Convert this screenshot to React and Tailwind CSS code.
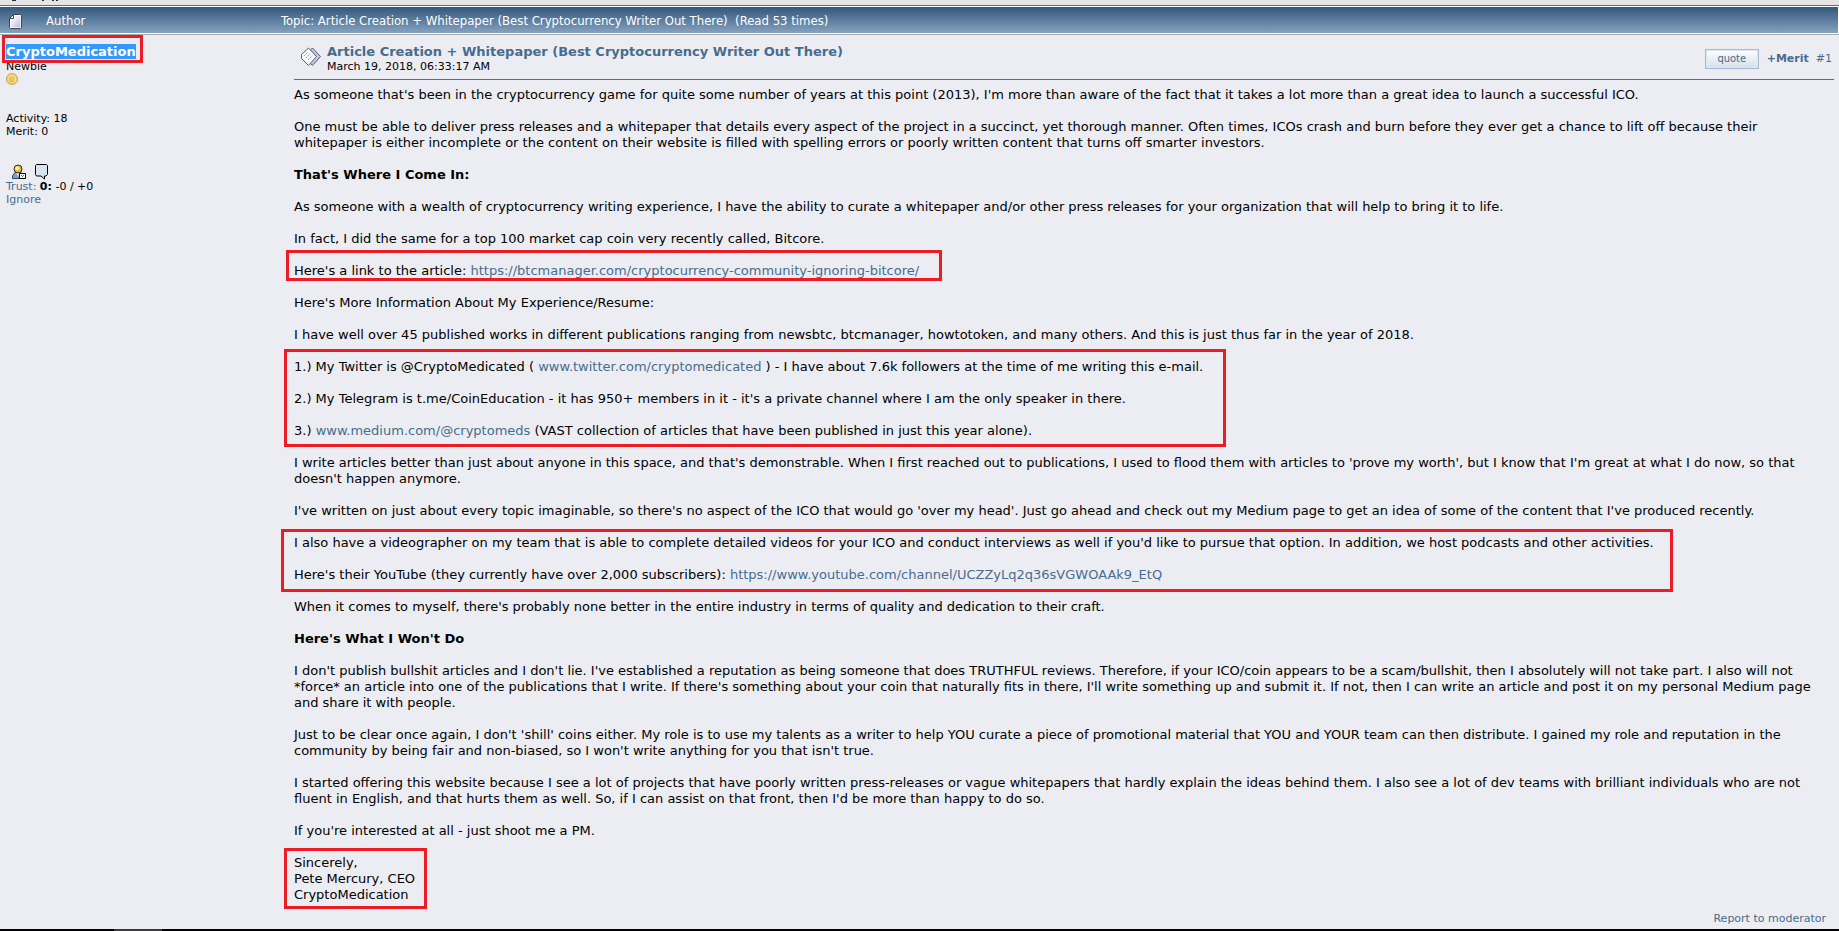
import React from "react";

const link = "text-[#476c8e]";

const Marked = ({ className, children }) => (
    <div className="relative">
        <div
            className={
                "absolute pointer-events-none border-[3px] border-[#ed1c24] " +
                className
            }
        ></div>
        {children}
    </div>
);

// tails of the line that is scrolled out above the table
function CutLine() {
    return (
        <svg width="64" height="2" viewBox="0 0 64 2" className="block">
            <path
                d="M12 0.5H16M42 0.5H44M52 0.5H54M56 0.5H58"
                stroke="#2a2a30"
                strokeWidth="1"
            />
        </svg>
    );
}

function PageIcon() {
    return (
        <svg width="13" height="15" viewBox="0 0 13 15" className="block">
            <defs>
                <linearGradient id="sheet" x1="0" y1="0" x2="1" y2="1">
                    <stop offset="0.2" stopColor="#ffffff" />
                    <stop offset="1" stopColor="#b0b0dc" />
                </linearGradient>
            </defs>
            <path
                d="M4.5 0.5H11.5L12.5 1.5V13.5L11.5 14.5H1.5L0.5 13.5V4.5Z"
                fill="url(#sheet)"
                stroke="#44444c"
            />
            <path
                d="M1.5 5V13.5H11.5V1.5H5"
                fill="none"
                stroke="#ffffff"
                strokeOpacity="0.7"
            />
            <path d="M4.5 0.5V4.5H0.5Z" fill="#fff" stroke="#44444c" />
        </svg>
    );
}

function PostIcon() {
    return (
        <svg width="20" height="20" viewBox="0 0 20 20" className="block">
            <path
                d="M11.5 1L19.5 9.5L11.5 18.5L5 12V7.5Z"
                fill="#c6c6f0"
                stroke="#5a5a68"
            />
            <path
                d="M7.5 1L15.5 9.5L7.5 18.5L0.5 11.5V7.5Z"
                fill="#f6f8fb"
                stroke="#5a5a62"
            />
            <path
                d="M3 9L6.5 5.5M5 11L9.5 6.5M7 13L11.5 8.5"
                stroke="#9aa4b4"
                strokeDasharray="2 1"
            />
        </svg>
    );
}

function CoinIcon() {
    return (
        <svg width="12" height="12" viewBox="0 0 12 12" className="block">
            <circle cx="6" cy="6" r="5.5" fill="#f0cd6c" stroke="#cda650" />
            <circle cx="6" cy="6" r="3.5" fill="#efc55e" stroke="#ffeaae" />
            <path d="M4 4.5A2.6 2.6 0 0 0 8 8" fill="none" stroke="#dcae50" />
        </svg>
    );
}

function ProfileIcon() {
    return (
        <svg width="15" height="16" viewBox="0 0 15 16" className="block">
            <path
                d="M0.5 14.5V12L3 8.5H9L11.5 12V14.5Z"
                fill="#7ba6cc"
                stroke="#2c4460"
            />
            <path d="M4.5 9L6 12L7.5 9Z" fill="#fff" />
            <circle cx="6" cy="5" r="4" fill="#e8b53c" stroke="#3a2c10" />
            <circle cx="5.2" cy="4.2" r="2" fill="#fdf0c0" />
            <path d="M7.5 9.5H13.5V14.5H7.5Z" fill="#fff" stroke="#000" />
            <path d="M9 11.5H10M11 11.5H12M10 12.5H11" stroke="#555" />
        </svg>
    );
}

function MessageIcon() {
    return (
        <svg width="13" height="16" viewBox="0 0 13 16" className="block">
            <path
                d="M1.5 0.5H11.5L12.5 1.5V10.5L11 12H9.5V15L6 12H1.5L0.5 10.5V1.5Z"
                fill="#d6e5f2"
                stroke="#000"
            />
        </svg>
    );
}

function Author() {
    return (
        <aside className="w-[282px] shrink-0 pl-[6px] pt-[9px] text-[11px] leading-[13px]">
            <Marked className="-left-1 -top-[9px] h-7 w-[141px]">
                <b className="text-[13px] leading-4">
                    <a href="#profile" className="bg-[#3399ff] text-white">
                        CryptoMedication
                    </a>
                </b>
            </Marked>
            <div>Newbie</div>
            <CoinIcon />
            <div className="mt-[27px]">Activity: 18</div>
            <div>Merit: 0</div>
            <div className="mt-[26px] flex gap-2 pl-[6px]">
                <a href="#profile" aria-label="View profile">
                    <ProfileIcon />
                </a>
                <a href="#message" aria-label="Send message">
                    <MessageIcon />
                </a>
            </div>
            <div>
                <a href="#trust" className={link}>
                    Trust:
                </a>{" "}
                <b>0:</b> -0 / +0
            </div>
            <a href="#ignore" className={link}>
                Ignore
            </a>
        </aside>
    );
}

function PostHeader() {
    return (
        <div className="flex h-[45px] items-start border-b border-[#696969] pt-[9px] pl-[7px]">
            <div className="pt-[3px]">
                <PostIcon />
            </div>
            <div className="pl-[6px]">
                <h1 className="text-[13px] leading-4 font-bold">
                    <a href="#post" className={link}>
                        Article Creation + Whitepaper (Best Cryptocurrency
                        Writer Out There)
                    </a>
                </h1>
                <div className="text-[11px] leading-[13px]">
                    March 19, 2018, 06:33:17 AM
                </div>
            </div>
            <div className="ml-auto flex items-center gap-[7px] pt-[5px] pr-[2px] text-[11px]">
                <button className="h-5 w-[54px] border border-[#a2bcd8] bg-linear-to-b from-white to-[#d5dfe9] font-['DejaVu_Sans_Condensed',sans-serif] text-[11px] leading-4 text-[#476c8e] ring-1 ring-inset ring-[#dce6f0]">
                    quote
                </button>
                <a href="#merit" className={"pl-px font-bold " + link}>
                    +Merit
                </a>
                <a href="#1" className={link}>
                    #1
                </a>
            </div>
        </div>
    );
}

function PostBody() {
    return (
        <div className="flex flex-col gap-4 pt-[7px] text-[13px] leading-4">
            <p>
                As someone that's been in the cryptocurrency game for quite some
                number of years at this point (2013), I'm more than aware of the
                fact that it takes a lot more than a great idea to launch a
                successful ICO.
            </p>
            <p>
                One must be able to deliver press releases and a whitepaper that
                details every aspect of the project in a succinct, yet thorough
                manner. Often times, ICOs crash and burn before they ever get a
                chance to lift off because their whitepaper is either incomplete
                or the content on their website is filled with spelling errors
                or poorly written content that turns off smarter investors.
            </p>
            <p className="font-bold">That's Where I Come In:</p>
            <p>
                As someone with a wealth of cryptocurrency writing experience, I
                have the ability to curate a whitepaper and/or other press
                releases for your organization that will help to bring it to
                life.
            </p>
            <p>
                In fact, I did the same for a top 100 market cap coin very
                recently called, Bitcore.
            </p>
            <Marked className="-left-2 -top-[13px] h-[31px] w-[656px]">
                <p>
                    Here's a link to the article:{" "}
                    <a href="#article" className={link}>
                        https://btcmanager.com/cryptocurrency-community-ignoring-bitcore/
                    </a>
                </p>
            </Marked>
            <p>Here's More Information About My Experience/Resume:</p>
            <p>
                I have well over 45 published works in different publications
                ranging from newsbtc, btcmanager, howtotoken, and many others.
                And this is just thus far in the year of 2018.
            </p>
            <Marked className="-left-[10px] -top-[10px] h-[98px] w-[942px]">
                <div className="flex flex-col gap-4">
                    <p>
                        1.) My Twitter is @CryptoMedicated ({" "}
                        <a href="#twitter" className={link}>
                            www.twitter.com/cryptomedicated
                        </a>{" "}
                        ) - I have about 7.6k followers at the time of me
                        writing this e-mail.
                    </p>
                    <p>
                        2.) My Telegram is t.me/CoinEducation - it has 950+
                        members in it - it's a private channel where I am the
                        only speaker in there.
                    </p>
                    <p>
                        3.){" "}
                        <a href="#medium" className={link}>
                            www.medium.com/@cryptomeds
                        </a>{" "}
                        (VAST collection of articles that have been published in
                        just this year alone).
                    </p>
                </div>
            </Marked>
            <p>
                I write articles better than just about anyone in this space,
                and that's demonstrable. When I first reached out to
                publications, I used to flood them with articles to 'prove my
                worth', but I know that I'm great at what I do now, so that
                doesn't happen anymore.
            </p>
            <p>
                I've written on just about every topic imaginable, so there's no
                aspect of the ICO that would go 'over my head'. Just go ahead
                and check out my Medium page to get an idea of some of the
                content that I've produced recently.
            </p>
            <Marked className="-left-[13px] -top-[6px] h-[63px] w-[1392px]">
                <div className="flex flex-col gap-4">
                    <p>
                        I also have a videographer on my team that is able to
                        complete detailed videos for your ICO and conduct
                        interviews as well if you'd like to pursue that option.
                        In addition, we host podcasts and other activities.
                    </p>
                    <p>
                        Here's their YouTube (they currently have over 2,000
                        subscribers):{" "}
                        <a href="#youtube" className={link}>
                            https://www.youtube.com/channel/UCZZyLq2q36sVGWOAAk9_EtQ
                        </a>
                    </p>
                </div>
            </Marked>
            <p>
                When it comes to myself, there's probably none better in the
                entire industry in terms of quality and dedication to their
                craft.
            </p>
            <p className="font-bold">Here's What I Won't Do</p>
            <p>
                I don't publish bullshit articles and I don't lie. I've
                established a reputation as being someone that does TRUTHFUL
                reviews. Therefore, if your ICO/coin appears to be a
                scam/bullshit, then I absolutely will not take part. I also will
                not *force* an article into one of the publications that I
                write. If there's something about your coin that naturally fits
                in there, I'll write something up and submit it. If not, then I
                can write an article and post it on my personal Medium page and
                share it with people.
            </p>
            <p>
                Just to be clear once again, I don't 'shill' coins either. My
                role is to use my talents as a writer to help YOU curate a piece
                of promotional material that YOU and YOUR team can then
                distribute. I gained my role and reputation in the community by
                being fair and non-biased, so I won't write anything for you
                that isn't true.
            </p>
            <p>
                I started offering this website because I see a lot of projects
                that have poorly written press-releases or vague whitepapers
                that hardly explain the ideas behind them. I also see a lot of
                dev teams with brilliant individuals who are not fluent in
                English, and that hurts them as well. So, if I can assist on
                that front, then I'd be more than happy to do so.
            </p>
            <p>If you're interested at all - just shoot me a PM.</p>
            <Marked className="-left-[10px] -top-[7px] h-[61px] w-[143px]">
                <p>
                    Sincerely,
                    <br />
                    Pete Mercury, CEO
                    <br />
                    CryptoMedication
                </p>
            </Marked>
        </div>
    );
}

export default function App() {
    return (
        <div className="bg-[#ecedf3] font-['Verdana','DejaVu_Sans',sans-serif] text-black">
            <div className="h-[5px] bg-[#e5e5e8] pl-0">
                <CutLine />
            </div>
            <div className="border-t border-[#696969] pt-px pr-px bg-white">
                <header className="flex h-[26px] items-center bg-linear-to-b from-[#33587e] to-[#86a3bf] pt-[2px] pl-[9px] font-['DejaVu_Sans_Condensed',sans-serif] text-[13px] text-white">
                    <PageIcon />
                    <span className="w-[235px] pl-6">Author</span>
                    <span className="pl-6">
                        Topic: Article Creation + Whitepaper (Best
                        Cryptocurrency Writer Out There) &nbsp;(Read 53 times)
                    </span>
                </header>
            </div>
            <div className="h-px bg-white"></div>
            <div className="flex border-t border-[#a9a9a9]">
                <Author />
                <main className="min-w-0 grow pl-3 pr-[5px]">
                    <PostHeader />
                    <PostBody />
                    <div className="pt-[9px] pr-2 pb-1 text-right text-[11px] leading-[13px]">
                        <a href="#report" className={link}>
                            Report to moderator
                        </a>
                    </div>
                </main>
            </div>
            <footer className="h-[2px] bg-black pl-[114px]">
                <div className="h-[2px] w-12 bg-[#3a3a3e]"></div>
            </footer>
        </div>
    );
}
